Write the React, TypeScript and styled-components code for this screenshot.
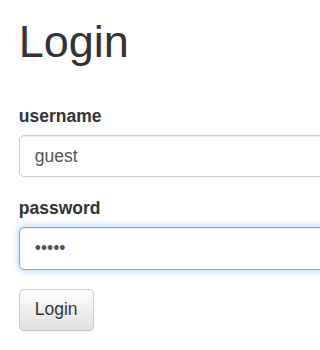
import React from 'react';
import styled, { createGlobalStyle } from 'styled-components';

const GlobalStyle = createGlobalStyle`
  html, body {
    margin: 0;
    padding: 0;
    background: #fff;
  }
  body {
    font-family: "Liberation Sans", Arial, Helvetica, sans-serif;
    font-size: 17.5px;
    line-height: 1.42857;
    color: #333;
  }
  * {
    box-sizing: border-box;
  }
`;

const Viewport = styled.div`
  width: 100%;
  max-width: 100vw;
  overflow: hidden;
`;

const Container = styled.div`
  width: 440px;
  padding: 0 18.75px;
`;

const Title = styled.h1`
  font-size: 45px;
  font-weight: 500;
  line-height: 1.1;
  margin: 17px 0 37px;
  color: #333;
`;

const Form = styled.form`
  display: flex;
  flex-direction: column;
  padding-bottom: 20px;
`;

const FormGroup = styled.div`
  display: flex;
  flex-direction: column;
  margin-bottom: 18.75px;
`;

const Label = styled.label`
  font-weight: 700;
  font-size: 17.5px;
  line-height: 25px;
  margin-bottom: 6.25px;
`;

const Input = styled.input<{ $focused?: boolean }>`
  display: block;
  width: 100%;
  height: 42.5px;
  padding: 7.5px 15px;
  font-family: inherit;
  font-size: 17.5px;
  line-height: 1.42857;
  color: #555;
  background: #fff;
  border: 1px solid ${(p) => (p.$focused ? '#66afe9' : '#ccc')};
  border-radius: 5px;
  outline: none;
  box-shadow: ${(p) =>
    p.$focused
      ? 'inset 0 1px 1px rgba(0,0,0,.075), 0 0 10px rgba(102,175,233,.6)'
      : 'inset 0 1px 1px rgba(0,0,0,.075)'};
`;

const Button = styled.button`
  align-self: flex-start;
  height: 42.5px;
  padding: 7.5px 15px;
  font-family: inherit;
  font-size: 17.5px;
  line-height: 1.42857;
  color: #333;
  text-shadow: 0 1px 0 #fff;
  background-image: linear-gradient(to bottom, #fff 0, #e0e0e0 100%);
  border: 1px solid #ccc;
  border-radius: 5px;
  box-shadow: inset 0 1px 0 rgba(255,255,255,.15), 0 1px 1px rgba(0,0,0,.075);
  cursor: pointer;
`;

const App: React.FC = () => {
  return (
    <>
      <GlobalStyle />
      <Viewport>
        <Container>
          <Title>Login</Title>
          <Form onSubmit={(e) => e.preventDefault()}>
            <FormGroup>
              <Label htmlFor="username">username</Label>
              <Input id="username" type="text" defaultValue="guest" />
            </FormGroup>
            <FormGroup>
              <Label htmlFor="password">password</Label>
              <Input id="password" type="password" defaultValue="guest" $focused />
            </FormGroup>
            <Button type="submit">Login</Button>
          </Form>
        </Container>
      </Viewport>
    </>
  );
};

export default App;
